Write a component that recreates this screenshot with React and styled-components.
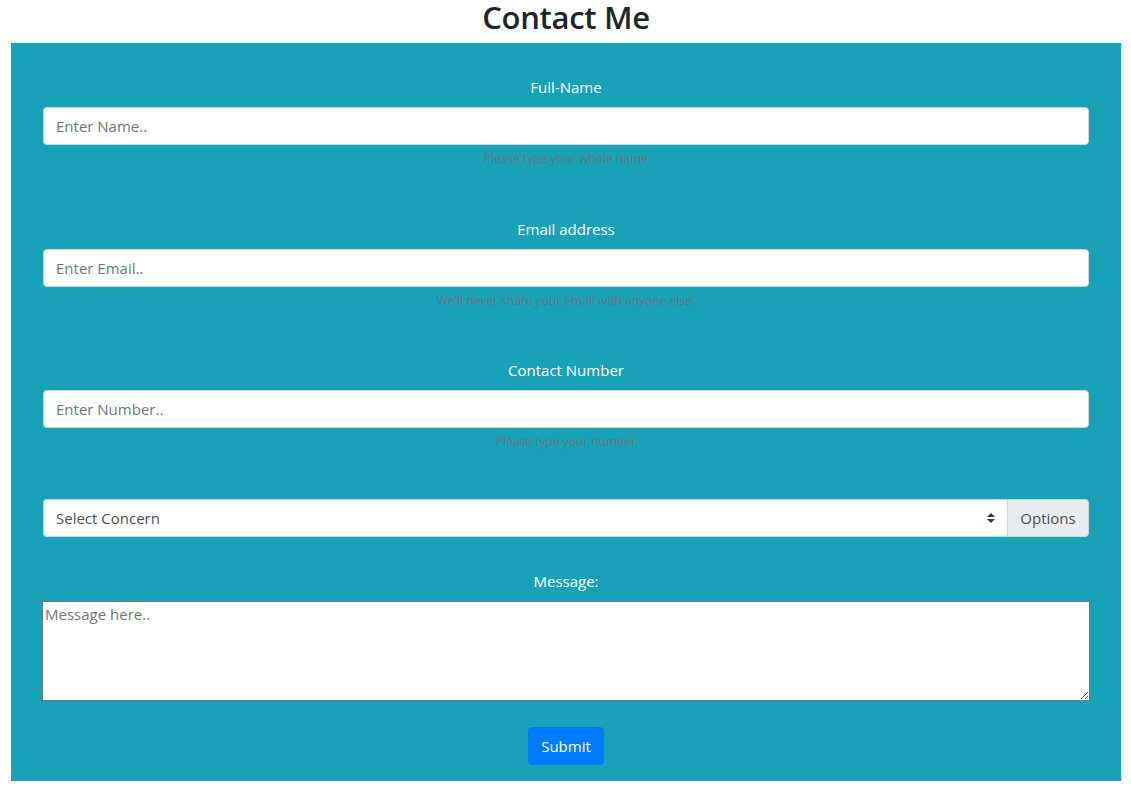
import React from "react";
import styled, { createGlobalStyle } from "styled-components";

const GlobalStyle = createGlobalStyle`
  body {
    margin: 0;
    background: #fff;
    font-family: "Open Sans", "Noto Sans", sans-serif;
    color: #212529;
  }
  * { box-sizing: border-box; }
`;

const Page = styled.div`
  padding: 0 10px 14px 11px;
`;

const Title = styled.h1`
  margin: 0;
  height: 43px;
  text-align: center;
  font-size: 31px;
  line-height: 34px;
  font-weight: 600;
  letter-spacing: -0.3px;
  color: #212529;
`;

const Panel = styled.form`
  background: #17a2b8;
  padding: 32px 32px 16px;
  display: flex;
  flex-direction: column;
`;

const Group = styled.div`
  display: flex;
  flex-direction: column;
  margin-bottom: ${(p) => p.$gap ?? 48}px;
`;

const Label = styled.label`
  color: #fff;
  text-align: center;
  font-size: 15px;
  line-height: 24px;
  margin-bottom: 8px;
`;

const Input = styled.input`
  height: 38px;
  width: 100%;
  padding: 6px 12px;
  font: inherit;
  font-size: 15px;
  color: #495057;
  background: #fff;
  border: 1px solid #ced4da;
  border-radius: 4px;
  outline: none;
  &::placeholder { color: #6c757d; }
`;

const Help = styled.small`
  margin-top: 4px;
  text-align: center;
  font-size: 12px;
  line-height: 19px;
  color: #6c757d;
`;

const InputGroup = styled.div`
  display: flex;
  height: 38px;
`;

const Select = styled.select`
  flex: 1;
  height: 38px;
  padding: 6px 28px 6px 12px;
  font: inherit;
  font-size: 15px;
  color: #495057;
  border: 1px solid #ced4da;
  border-right: none;
  border-radius: 4px 0 0 4px;
  appearance: none;
  background: #fff url("data:image/svg+xml,%3csvg xmlns='http://www.w3.org/2000/svg' width='4' height='5' viewBox='0 0 4 5'%3e%3cpath fill='%23343a40' d='M2 0L0 2h4zm0 5L0 3h4z'/%3e%3c/svg%3e") no-repeat right 12px center / 8px 10px;
  outline: none;
`;

const Addon = styled.label`
  width: 82px;
  display: flex;
  align-items: center;
  justify-content: center;
  font-size: 15px;
  color: #495057;
  background: #e9ecef;
  border: 1px solid #ced4da;
  border-radius: 0 4px 4px 0;
`;

const TextArea = styled.textarea`
  display: block;
  height: 100px;
  width: calc(100% + 2px);
  margin: 0 -1px 26px;
  padding: 2px;
  font: inherit;
  font-size: 15px;
  border: 1px solid #767676;
  outline: none;
  &::placeholder { color: #757575; }
`;

const Submit = styled.button`
  align-self: center;
  height: 38px;
  padding: 0 12px;
  font: inherit;
  font-size: 15px;
  color: #fff;
  background: #007bff;
  border: 1px solid #007bff;
  border-radius: 4px;
`;

const fields = [
  { label: "Full-Name", placeholder: "Enter Name..", help: "Please type your whole name", gap: 49 },
  { label: "Email address", placeholder: "Enter Email..", help: "We'll never share your email with anyone else." },
  { label: "Contact Number", placeholder: "Enter Number..", help: "Please type your number" },
];

export default function App() {
  return (
    <Page>
      <GlobalStyle />
      <Title>Contact Me</Title>
      <Panel onSubmit={(e) => e.preventDefault()}>
        {fields.map((f) => (
          <Group key={f.label} $gap={f.gap}>
            <Label>{f.label}</Label>
            <Input placeholder={f.placeholder} />
            <Help>{f.help}</Help>
          </Group>
        ))}
        <Group $gap={32}>
          <InputGroup>
            <Select defaultValue="">
              <option value="">Select Concern</option>
              <option>General</option>
              <option>Support</option>
            </Select>
            <Addon>Options</Addon>
          </InputGroup>
        </Group>
        <Label>Message:</Label>
        <TextArea placeholder="Message here.." />
        <Submit type="submit">Submit</Submit>
      </Panel>
    </Page>
  );
}
